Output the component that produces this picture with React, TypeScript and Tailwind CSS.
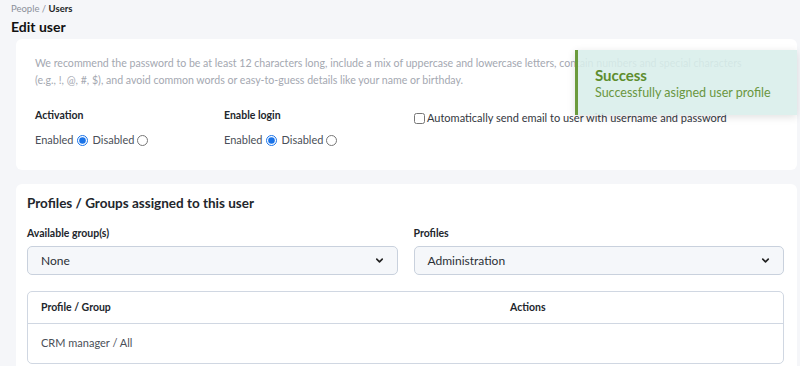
import React, { useState } from 'react';
import { ChevronDown } from 'lucide-react';

const font = { fontFamily: 'Lato, "Open Sans", sans-serif' };

const RadioPair: React.FC<{ name: string }> = ({ name }) => {
  const [val, setVal] = useState('enabled');
  return (
    <div className="flex items-center gap-[3px] text-[11px] text-[#4a4f58]">
      <span>Enabled</span>
      <input
        type="radio"
        name={name}
        checked={val === 'enabled'}
        onChange={() => setVal('enabled')}
        className="w-[11px] h-[11px] m-0 accent-[#1a73e8]"
      />
      <span className="ml-[2px]">Disabled</span>
      <input
        type="radio"
        name={name}
        checked={val === 'disabled'}
        onChange={() => setVal('disabled')}
        className="w-[11px] h-[11px] m-0 accent-[#1a73e8]"
      />
    </div>
  );
};

const Select: React.FC<{ value: string }> = ({ value }) => (
  <div className="relative h-[29px] flex items-center rounded-[5px] border border-[#c9d1dd] bg-[#f5f7fa] pl-[13px] pr-[12px] text-[12px] text-[#2b2f36]">
    <span className="flex-1">{value}</span>
    <ChevronDown size={11} strokeWidth={3.5} className="text-[#222]" />
  </div>
);

export default function App() {
  return (
    <div style={font} className="relative w-[800px] h-[366px] overflow-hidden bg-[#f5f6f9] pr-[3px]">
      <div className="pl-[11px] pt-[3px] text-[9.5px] leading-[12px]">
        <span className="text-[#8b9099]">People / </span>
        <span className="font-bold text-[#1c1f24]">Users</span>
      </div>
      <h1 className="pl-[11px] mt-[2px] text-[14px] leading-[20px] font-bold text-[#111]">Edit user</h1>

      <div className="ml-[16px] mt-[2px] h-[131px] rounded-[6px] bg-white pl-[19px] pr-[20px] pt-[16px]">
        <p className="text-[10.6px] leading-[17px] text-[#a4a8b1] whitespace-nowrap">
          We recommend the password to be at least 12 characters long, include a mix of uppercase and lowercase letters, contain numbers and special characters
          <br />
          (e.g., !, @, #, $), and avoid common words or easy-to-guess details like your name or birthday.
        </p>
        <div className="mt-[19px] flex">
          <div className="w-[189px]">
            <div className="text-[10.5px] font-bold text-[#22262c] leading-[14px]">Activation</div>
            <div className="mt-[10px]"><RadioPair name="activation" /></div>
          </div>
          <div className="w-[190px]">
            <div className="text-[10.5px] font-bold text-[#22262c] leading-[14px]">Enable login</div>
            <div className="mt-[10px]"><RadioPair name="login" /></div>
          </div>
          <label className="flex items-center gap-[2px] self-start mt-[2px] text-[11px] text-[#33373e]">
            <input type="checkbox" className="w-[11px] h-[11px] m-0" />
            <span>Automatically send email to user with username and password</span>
          </label>
        </div>
      </div>

      <div className="ml-[16px] mt-[14px] rounded-[6px] bg-white pl-[11px] pr-[13px] pt-[10px] pb-[10px]">
        <h2 className="text-[13.5px] leading-[18px] font-bold text-[#22262c]">Profiles / Groups assigned to this user</h2>
        <div className="mt-[14px] grid grid-cols-2 gap-[16px]">
          <div>
            <div className="text-[10.5px] font-bold text-[#22262c] leading-[14px] mb-[6px]">Available group(s)</div>
            <Select value="None" />
          </div>
          <div>
            <div className="text-[10.5px] font-bold text-[#22262c] leading-[14px] mb-[6px]">Profiles</div>
            <Select value="Administration" />
          </div>
        </div>
        <div className="mt-[16px] rounded-[5px] border border-[#d0d7e2]">
          <div className="flex h-[32px] items-center border-b border-[#d0d7e2] px-[13px] text-[10.5px] font-bold text-[#22262c]">
            <span className="w-[469px]">Profile / Group</span>
            <span>Actions</span>
          </div>
          <div className="flex h-[39px] items-center px-[13px] text-[11px] text-[#4a4f58]">
            CRM manager / All
          </div>
        </div>
      </div>

      <div className="absolute left-[575px] top-[50px] w-[222px] h-[65px] border-l-[3px] border-[#6b9a3c] bg-[#d8eeeb]/[0.88] shadow-[0_2px_8px_rgba(0,0,0,0.12)] pl-[17px] pt-[16px]">
        <div className="text-[15px] leading-[19px] font-bold text-[#5e8d2e]">Success</div>
        <div className="text-[12.5px] leading-[16px] text-[#6a9640]">Successfully asigned user profile</div>
      </div>
    </div>
  );
}
